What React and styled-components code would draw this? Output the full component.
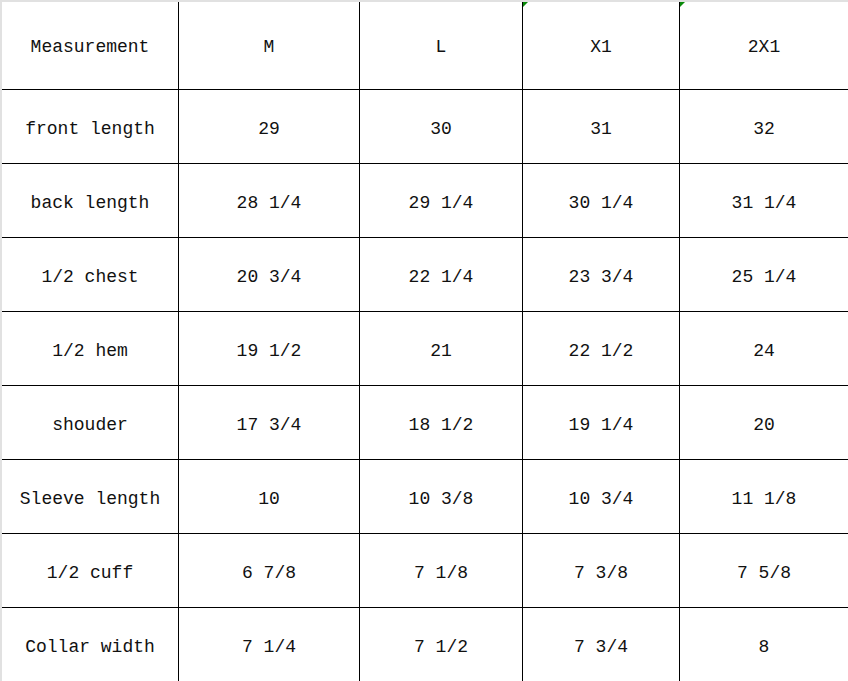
import * as React from 'react'
import styled, { createGlobalStyle } from 'styled-components'

const Global = createGlobalStyle`
  html, body {
    margin: 0;
    padding: 0;
    background: #ffffff;
  }
  body {
    font-family: "Liberation Mono", "DejaVu Sans Mono", monospace;
  }
`

const Sheet = styled.div`
  width: 848px;
  height: 681px;
  overflow: hidden;
  box-sizing: border-box;
  border-top: 2px solid #e1e1e1;
  border-left: 2px solid #e1e1e1;
  background: #fff;
`

const Grid = styled.div`
  display: grid;
  grid-template-columns: 177px 181px 163px 157px 168px;
  grid-template-rows: 90px repeat(8, 74px);
  margin-top: -2px;
`

const Cell = styled.div`
  position: relative;
  display: flex;
  align-items: center;
  justify-content: center;
  padding-top: 4px;
  box-sizing: border-box;
  border-bottom: 1px solid #000;
  border-right: ${p => (p.$last ? 'none' : '1px solid #000')};
  font-size: 18px;
  color: #111;
  white-space: pre;

  &::before {
    content: '';
    display: ${p => (p.$flag ? 'block' : 'none')};
    position: absolute;
    top: 2px;
    left: 0;
    width: 0;
    height: 0;
    border-top: 5px solid #0a8a0a;
    border-right: 5px solid transparent;
  }
`

const head = ['Measurement', 'M', 'L', 'X1', '2X1']

const rows = [
  ['front length', '29', '30', '31', '32'],
  ['back length', '28 1/4', '29 1/4', '30 1/4', '31 1/4'],
  ['1/2 chest', '20 3/4', '22 1/4', '23 3/4', '25 1/4'],
  ['1/2 hem', '19 1/2', '21', '22 1/2', '24'],
  ['shouder', '17 3/4', '18 1/2', '19 1/4', '20'],
  ['Sleeve length', '10', '10 3/8', '10 3/4', '11 1/8'],
  ['1/2 cuff', '6 7/8', '7 1/8', '7 3/8', '7 5/8'],
  ['Collar width', '7 1/4', '7 1/2', '7 3/4', '8'],
]

const App = () => {
  return (
    <>
      <Global />
      <Sheet>
        <Grid>
          {head.map((h, i) => (
            <Cell key={h} $last={i === 4} $flag={i === 3 || i === 4}>
              {h}
            </Cell>
          ))}
          {rows.map((r, ri) =>
            r.map((v, i) => (
              <Cell key={ri + '-' + i} $last={i === 4}>
                {v}
              </Cell>
            ))
          )}
        </Grid>
      </Sheet>
    </>
  )
}

export default App
